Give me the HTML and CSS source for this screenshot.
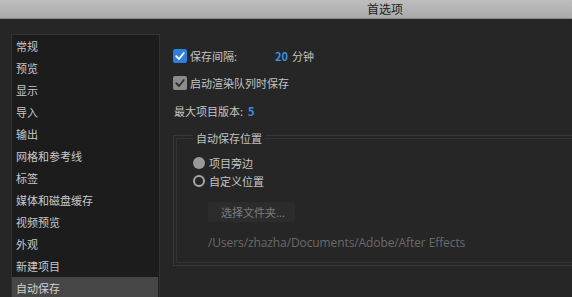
FILE: index.html
```html
<!DOCTYPE html>
<html lang="zh-CN">
<head>
    <meta charset="UTF-8">
    <title>首选项</title>
    <link rel="stylesheet" href="styles.css">
</head>
<body>
    <div class="titlebar">
        <span class="title">首选项</span>
    </div>
    <div class="window">
        <ul class="sidebar">
            <li>常规</li>
            <li>预览</li>
            <li>显示</li>
            <li>导入</li>
            <li>输出</li>
            <li>网格和参考线</li>
            <li>标签</li>
            <li>媒体和磁盘缓存</li>
            <li>视频预览</li>
            <li>外观</li>
            <li>新建项目</li>
            <li class="active">自动保存</li>
        </ul>
        <div class="panel">
            <div class="row">
                <span class="check on"><svg viewBox="0 0 14 14"><path d="M3.2 7.2 L6 10 L10.8 4" /></svg></span>
                <span class="label">保存间隔:</span>
                <span class="value">20</span>
                <span class="unit">分钟</span>
            </div>
            <div class="row">
                <span class="check off"><svg viewBox="0 0 14 14"><path d="M3.2 7.2 L6 10 L10.8 4" /></svg></span>
                <span>启动渲染队列时保存</span>
            </div>
            <div class="row plain">
                <span>最大项目版本:</span>
                <span class="value">5</span>
            </div>
            <fieldset class="group">
                <legend>自动保存位置</legend>
                <div class="radio-row">
                    <span class="radio filled"></span>
                    <span>项目旁边</span>
                </div>
                <div class="radio-row">
                    <span class="radio ring"></span>
                    <span>自定义位置</span>
                </div>
                <div class="btn">选择文件夹...</div>
                <div class="path">/Users/zhazha/Documents/Adobe/After Effects</div>
            </fieldset>
        </div>
    </div>
</body>
</html>
```

FILE: styles.css
```css
html, body {
    margin: 0;
    padding: 0;
}
body {
    width: 572px;
    height: 297px;
    overflow: hidden;
    background: #262626;
    font-family: "Noto Sans CJK SC", "Noto Sans", sans-serif;
    font-size: 11px;
    color: #c4c4c4;
}
.titlebar {
    height: 18px;
    background: linear-gradient(#bebebe, #a9a9a9);
    border-bottom: 1px solid #8a8a8a;
    display: flex;
    align-items: center;
    padding-left: 367px;
}
.title {
    font-size: 12px;
    color: #1e1e1e;
    line-height: 18px;
}
.window {
    display: flex;
    align-items: flex-start;
}
.sidebar {
    list-style: none;
    margin: 15px 0 0 11px;
    padding: 0;
    width: 147px;
    height: 270px;
    background: #1c1c1c;
    border: 1px solid #333;
    border-bottom: none;
    flex: none;
}
.sidebar li {
    height: 22px;
    line-height: 22px;
    padding-left: 4px;
    color: #c8c8c8;
}
.sidebar li.active {
    background: #464646;
    color: #d2d2d2;
    margin-right: 1px;
}
.panel {
    margin-left: 13px;
    padding-top: 26px;
    display: flex;
    flex-direction: column;
    flex: none;
    width: 420px;
}
.row {
    height: 22px;
    display: flex;
    align-items: center;
    margin-bottom: 5px;
}
.row.plain {
    margin-top: 1px;
    padding-left: 1px;
}
.check {
    width: 14px;
    height: 14px;
    border-radius: 2px;
    margin-right: 3px;
    display: flex;
}
.check svg {
    width: 14px;
    height: 14px;
    fill: none;
    stroke-width: 1.8;
    stroke-linecap: round;
    stroke-linejoin: round;
}
.check.on {
    background: #2f7fdc;
}
.check.on svg {
    stroke: #ffffff;
}
.check.off {
    background: #8c8c8c;
}
.check.off svg {
    stroke: #2b2b2b;
}
.label {
    width: 85px;
}
.value {
    color: #3d90de;
    font-weight: bold;
    margin-left: 5px;
    margin-right: 4px;
}
.row .label + .value {
    margin-left: 0;
}
.group {
    margin: -2px 0 0 0;
    padding: 0 0 0 19px;
    border: 1px solid #383838;
    box-shadow: inset 0 0 0 2px #262626, inset 0 0 0 3px #333;
    height: 139px;
    min-width: 0;
}
.group legend {
    margin-left: 0;
    padding: 6px 3px 0;
    background: #262626;
    line-height: 14px;
    color: #c2c2c2;
}
.radio-row {
    height: 18px;
    display: flex;
    align-items: center;
}
.radio-row:first-of-type {
    margin-top: 9px;
}
.radio {
    width: 12px;
    height: 12px;
    border-radius: 50%;
    box-sizing: border-box;
    margin-right: 4px;
}
.radio.filled {
    background: #9a9a9a;
}
.radio.ring {
    border: 2px solid #a8a8a8;
}
.btn {
    margin: 12px 0 0 15px;
    width: 87px;
    height: 20px;
    line-height: 20px;
    box-sizing: border-box;
    padding-left: 13px;
    background: #2c2c2c;
    border-radius: 3px;
    color: #7c7c7c;
}
.path {
    margin: 12px 0 0 15px;
    font-family: "Open Sans", "Noto Sans CJK SC", sans-serif;
    font-size: 12px;
    color: #6a6a6a;
    letter-spacing: -0.1px;
}
```
